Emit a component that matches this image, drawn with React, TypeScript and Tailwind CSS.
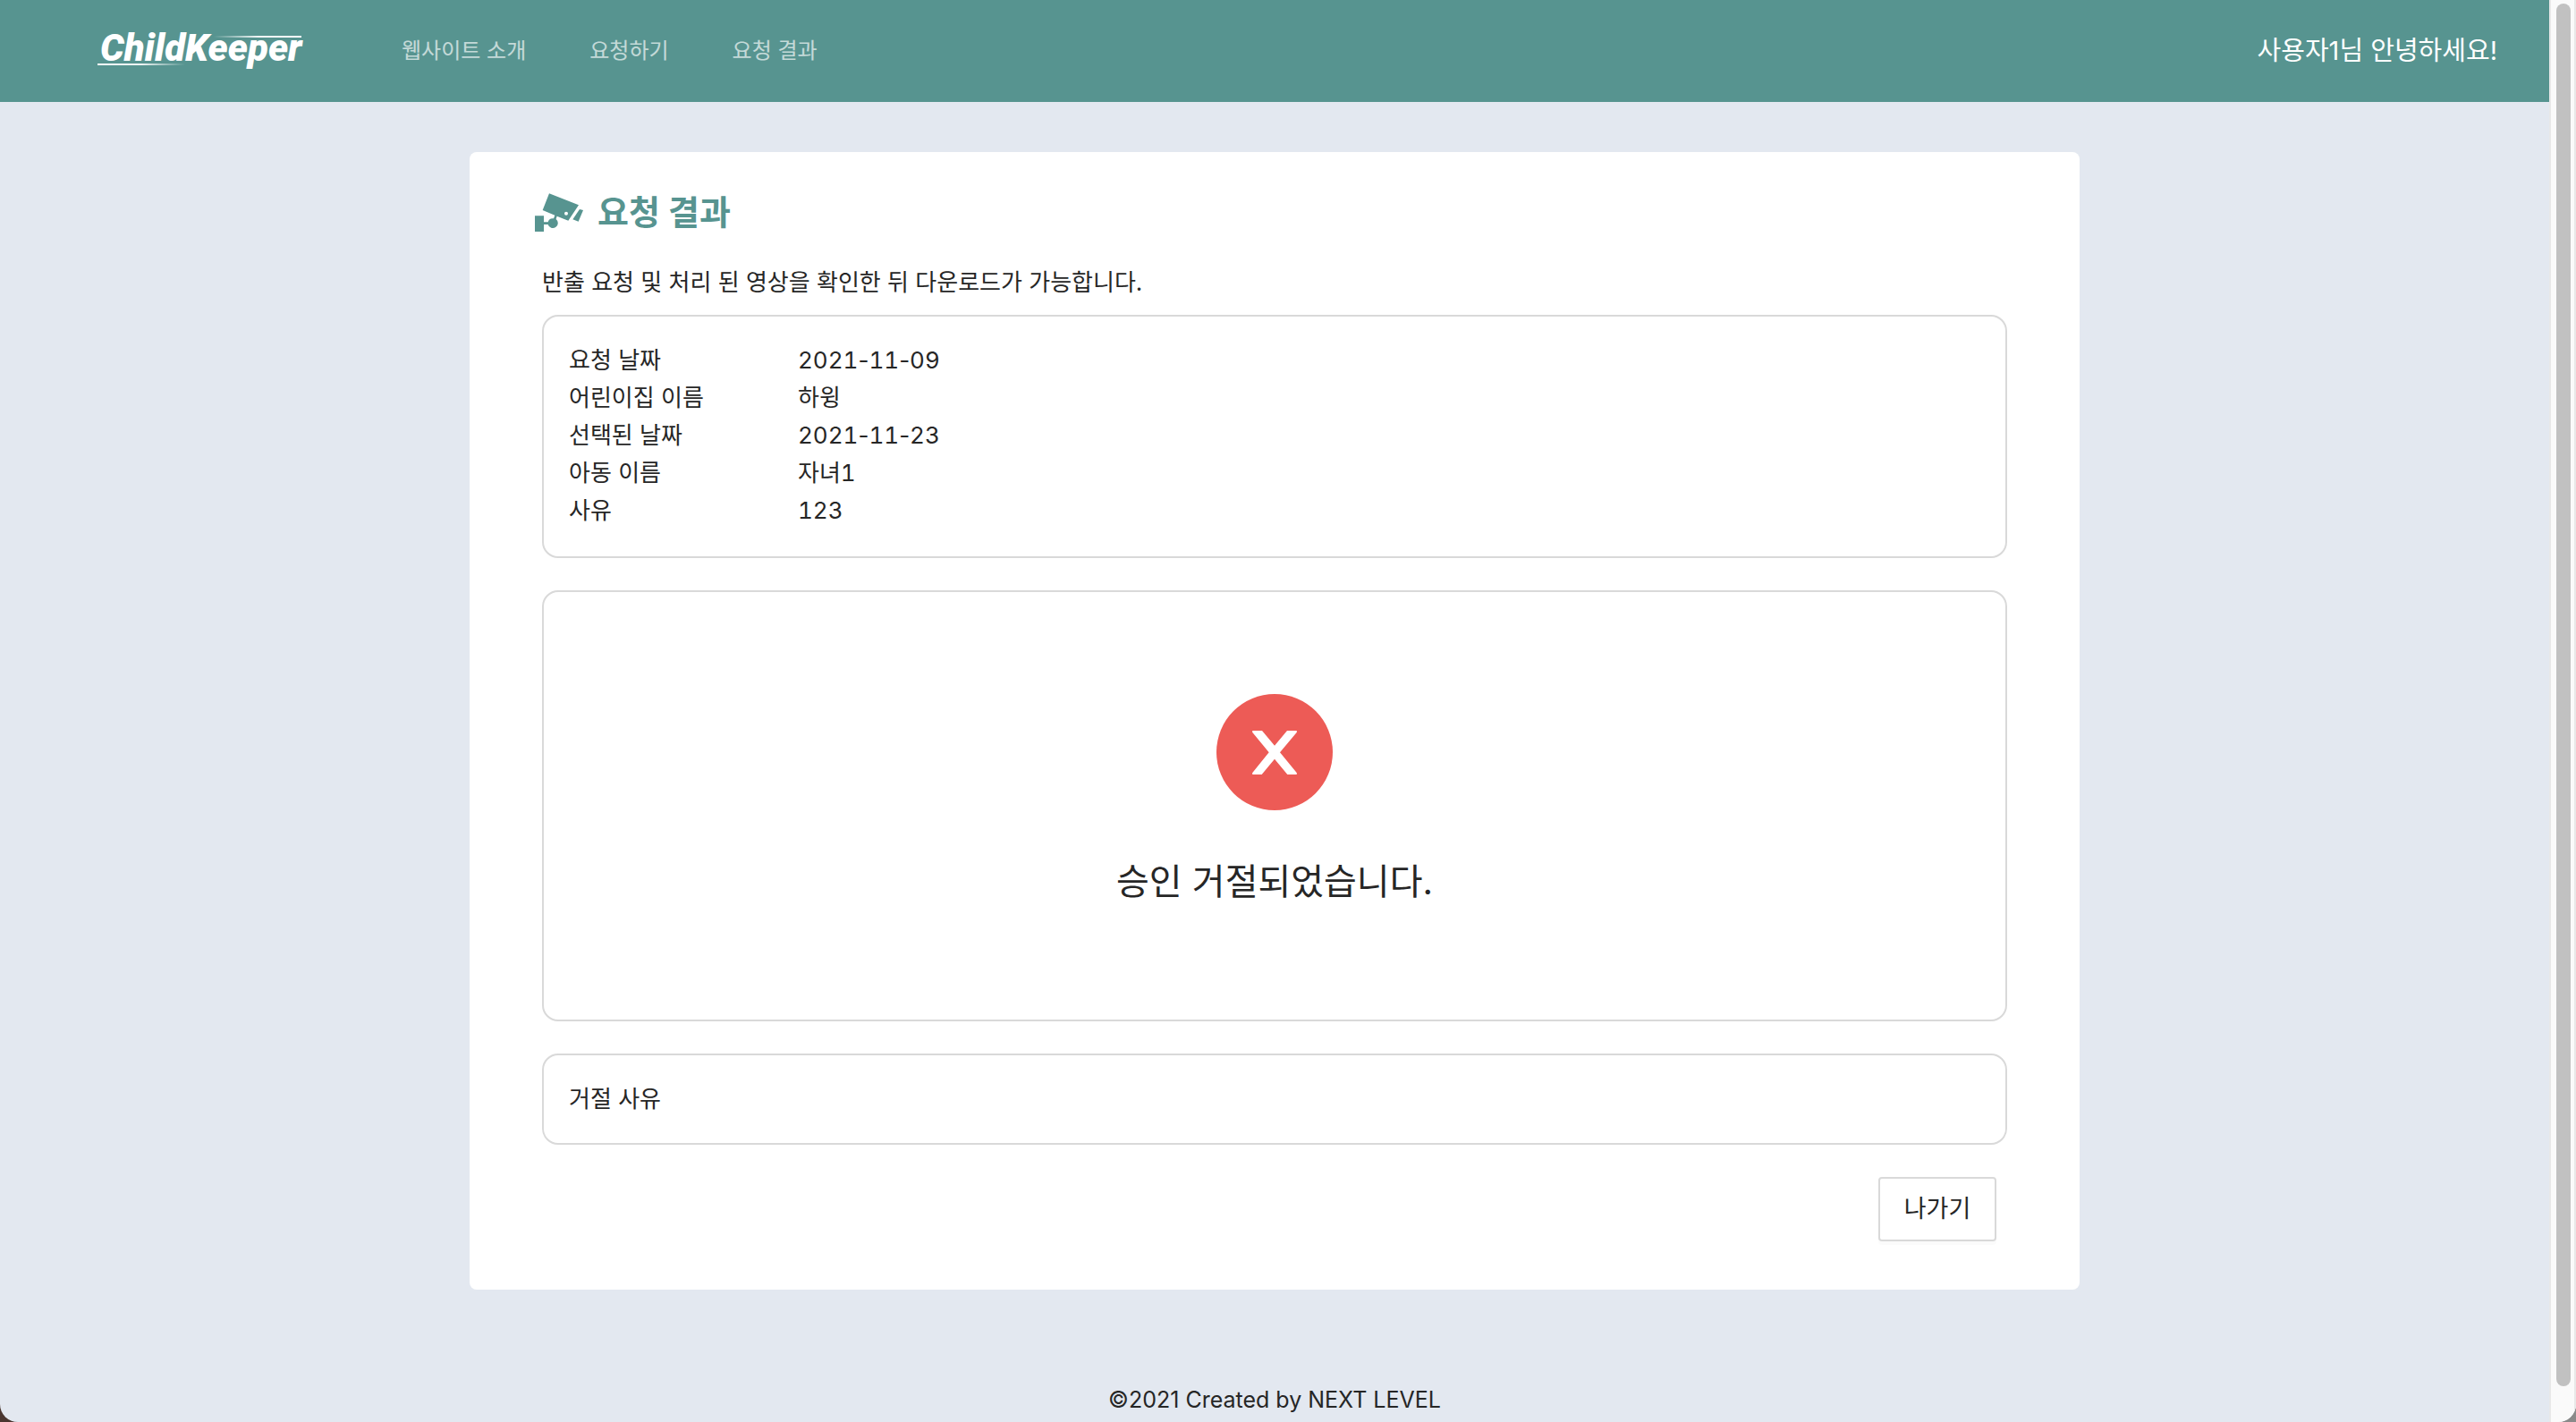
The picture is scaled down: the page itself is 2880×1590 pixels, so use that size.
import { Fragment, type ReactNode } from 'react';

const navItems = ['웹사이트 소개', '요청하기', '요청 결과'];

const details = [
  { label: '요청 날짜', value: '2021-11-09' },
  { label: '어린이집 이름', value: '하윙' },
  { label: '선택된 날짜', value: '2021-11-23' },
  { label: '아동 이름', value: '자녀1' },
  { label: '사유', value: '123' },
];

function Logo() {
  return (
    <a href="#home" aria-label="ChildKeeper" className="block h-10 w-[232px] shrink-0">
      <svg viewBox="0 0 232 40" className="h-full w-full overflow-visible">
        <defs>
          <linearGradient id="streak-top" x1="0" x2="1" y1="0" y2="0">
            <stop offset="0" stopColor="#fff" stopOpacity="0" />
            <stop offset="0.5" stopColor="#fff" stopOpacity="0.9" />
            <stop offset="1" stopColor="#fff" />
          </linearGradient>
          <linearGradient id="streak-bottom" x1="0" x2="1" y1="0" y2="0">
            <stop offset="0" stopColor="#fff" />
            <stop offset="0.5" stopColor="#fff" stopOpacity="0.9" />
            <stop offset="1" stopColor="#fff" stopOpacity="0" />
          </linearGradient>
        </defs>
        <rect x="130" y="3" width="98" height="2" fill="url(#streak-top)" />
        <rect x="0" y="34" width="98" height="2" fill="url(#streak-bottom)" />
        <text x="3" y="31" fill="#fff" className="font-[Roboto,sans-serif] text-[42px] font-black italic">
          ChildKeeper
        </text>
      </svg>
    </a>
  );
}

function CameraIcon() {
  return (
    <svg viewBox="0 0 162 129" className="h-[43px] w-[54px] shrink-0 fill-[#579490]" aria-hidden="true">
      <path
        fillRule="evenodd"
        d="M48 1 L147 40 L112 92 L74 77 L71 87 A17 17 0 1 1 44 105 L30 105 L30 129 L0 129 L0 76 L30 76 L30 97 L44 97 A17 17 0 0 1 63 85 L67 74 L26 57 Z M105 62 A6 6 0 1 0 105 74 A6 6 0 1 0 105 62 Z"
      />
      <path d="M150 54 L162 57 L146 95 L127 88 Z" />
    </svg>
  );
}

function RejectedIcon() {
  return (
    <svg viewBox="0 0 390 390" className="size-[130px]" aria-hidden="true">
      <circle cx="195" cy="195" r="195" fill="#ed5b56" />
      <path
        fill="#fff"
        d="M122 123 H153 L195 173 L237 123 H268 Q272 124 269 129 L213 196 L269 264 Q272 269 268 270 H238 L195 218 L152 270 H122 Q118 269 121 264 L176 196 L121 129 Q118 124 122 123 Z"
      />
    </svg>
  );
}

// Digits share one width while the separators keep their own.
function TabularValue({ value }: { value: string }) {
  return (
    <>
      {value.split('-').map((part, i) => (
        <Fragment key={i}>
          {i > 0 && '-'}
          <span className="tabular-nums">{part}</span>
        </Fragment>
      ))}
    </>
  );
}

function Panel({ className, children }: { className: string; children: ReactNode }) {
  return <div className={`rounded-[18px] border-2 border-[#d9d9d9] px-7 ${className}`}>{children}</div>;
}

export default function App() {
  return (
    <div className="min-h-screen bg-linear-to-r from-[#4a3630] to-[#8a8a8a] font-['Inter','Noto_Sans_CJK_KR',sans-serif] text-[26px] leading-[42px] text-[#262626]">
      <div className="flex min-h-screen overflow-clip rounded-b-[20px] bg-[#e3e8f0]">
        <div className="flex min-w-0 flex-1 flex-col">
          <header className="flex h-[114px] items-center bg-[#579490] pr-[58px] pl-[109px]">
            <Logo />
            <nav className="ml-[108px] flex gap-[71px] text-2xl text-white/65">
              {navItems.map((item) => (
                <a key={item} href="#nav">
                  {item}
                </a>
              ))}
            </nav>
            <p className="ml-auto text-[29px] text-white">사용자1님 안녕하세요!</p>
          </header>

          <main className="mx-auto mt-14 w-full max-w-[1800px] rounded-lg bg-white px-[81px] pt-10 pb-[54px]">
            <div className="-ml-2 flex h-[54px] items-center gap-4 text-[#579490]">
              <CameraIcon />
              <h1 className="text-[38px] font-bold">요청 결과</h1>
            </div>
            <p className="mt-[31px]">반출 요청 및 처리 된 영상을 확인한 뒤 다운로드가 가능합니다.</p>

            <Panel className="mt-[15px] pt-7 pb-[30px]">
              <dl>
                {details.map(({ label, value }) => (
                  <div key={label} className="flex">
                    <dt className="w-64">{label}</dt>
                    <dd>
                      <TabularValue value={value} />
                    </dd>
                  </div>
                ))}
              </dl>
            </Panel>

            <Panel className="mt-9 flex flex-col items-center pt-[114px] pb-[124px]">
              <RejectedIcon />
              <h2 className="mt-[50px] text-[40px] leading-[60px]">승인 거절되었습니다.</h2>
            </Panel>

            <Panel className="mt-9 py-7">
              <p>거절 사유</p>
            </Panel>

            <div className="mt-9 mr-3 flex justify-end">
              <button
                type="button"
                className="h-[72px] w-[132px] rounded border-2 border-[#d9d9d9] bg-white text-[27px] shadow-[0_4px_0_rgba(0,0,0,0.015)]"
              >
                나가기
              </button>
            </div>
          </main>

          <footer className="mt-auto pb-1 text-center text-[25px]">©2021 Created by NEXT LEVEL</footer>
        </div>

        <div className="sticky top-0 h-screen w-[30px] border-x-2 border-[#e8e8e8] bg-[#fafafa] px-[5px] pt-1 pb-10" aria-hidden="true">
          <div className="ml-px h-full w-4 rounded-full bg-[#c1c1c1]" />
        </div>
      </div>
    </div>
  );
}
